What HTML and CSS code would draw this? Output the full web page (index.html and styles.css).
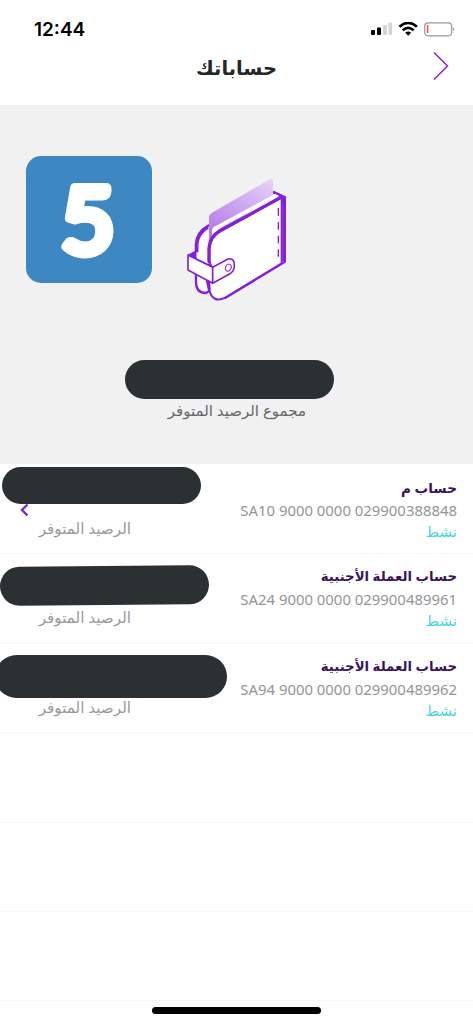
FILE: index.html
```
<!DOCTYPE html>
<html lang="ar">
<head>
    <title>حساباتك</title>
    <meta charset="UTF-8">
    <link rel="stylesheet" href="styles.css">
</head>
<body>
    <div class="status-bar">
        <span class="time">12:44</span>
        <svg class="status-icons" width="86" height="16" viewBox="0 0 86 16">
            <rect x="1" y="8" width="4" height="5" rx="1" fill="#000"/>
            <rect x="7" y="5.500" width="4" height="7.500" rx="1" fill="#000"/>
            <rect x="13" y="3" width="4" height="10" rx="1" fill="#d4d4d4"/>
            <rect x="18.500" y="0.500" width="3.500" height="12.500" rx="1" fill="#d4d4d4"/>
            <path d="M29.500 4.700Q38.200-2.900 46.900 4.700" fill="none" stroke="#000" stroke-width="2.700"/>
            <path d="M32.700 8.200Q38.200 3.400 43.700 8.200" fill="none" stroke="#000" stroke-width="2.600"/>
            <path d="M35.200 10.800Q38.200 8.200 41.200 10.800L38.200 13.800Z" fill="#000"/>
            <rect x="54.700" y="0.800" width="27" height="13" rx="3.500" fill="#fff" stroke="#999" stroke-width="1.200"/>
            <rect x="56.800" y="3" width="1.500" height="8" fill="#f34b45"/>
            <path d="M83.200 5v4.600q2-2.300 0-4.600z" fill="#888"/>
        </svg>
    </div>
    <div class="header">
        <h1 class="title" dir="rtl">حساباتك</h1>
        <svg class="back" width="18" height="30" viewBox="0 0 18 30">
            <path d="M2 1.500L15.500 15L2 28.500" fill="none" stroke="#8a2bd2" stroke-width="1.600"/>
        </svg>
    </div>
    <div class="summary">
        <div class="step"><svg width="126" height="127" viewBox="0 0 126 127"><text class="step-number" x="62" y="96.500">5</text></svg></div>
        <svg class="wallet" width="140" height="145" viewBox="0 0 420 435">
            <defs>
                <linearGradient id="card" x1="1" y1="0" x2="0.300" y2="1">
                    <stop offset="0" stop-color="#e6d3f7"/>
                    <stop offset="1" stop-color="#b57bea"/>
                </linearGradient>
            </defs>
            <g stroke="#8420dc" stroke-linejoin="round" fill="#fff">
                <path d="M78 350V238Q80 202 112 184L310 82L345 97L130 370L108 384Q78 384 78 350Z" stroke-width="7"/>
                <path d="M80 262V236Q84 203 114 186" fill="none" stroke-width="11"/>
                <path d="M117 240V158Q117 148 126 143L298 44Q309 38 309 50V94L130 215Z" fill="url(#card)" stroke="none"/>
                <path d="M126 212V196Q126 188 136 184L316 86L326 92L150 190Z" stroke="none"/>
                <path d="M118 375V252Q120 215 150 199L335 97V295L166 398Q128 416 118 375Z" stroke-width="6"/>
                <path d="M117 300V250Q120 214 149 198L333 97" fill="none" stroke-width="10"/>
                <path d="M310 80L345 97V291L164 400" fill="none" stroke-width="6"/>
                <path d="M342 97V290" fill="none" stroke-width="10"/>
                <path d="M325 129v23M325 171v23M325 212v23M325 253v22" fill="none" stroke-width="4"/>
                <path d="M54 270L78 260L128 307L174 282Q195 278 193 303Q192 319 180 326L128 355L54 315Z" stroke="none"/>
                <path d="M128 307L174 282Q195 278 193 303Q192 319 180 326L128 355L54 315V270L128 307V355" stroke-width="5"/>
                <path d="M54 270L78 258V281L118 300V288L128 307Z" fill="#8420dc" stroke-width="3"/>
                <path d="M112 346L118 375" fill="none" stroke-width="9"/>
                <ellipse cx="175" cy="308" rx="8" ry="11" transform="rotate(25 175 308)" stroke-width="3"/>
            </g>
        </svg>
        <div class="total-mask"></div>
        <div class="total-label" dir="rtl">مجموع الرصيد المتوفر</div>
    </div>
    <div class="accounts">
        <div class="account">
            <div class="balance">
                <svg class="arrow" width="9" height="14" viewBox="0 0 9 14"><path d="M7.500 1.500L2 7L7.500 12.500" fill="none" stroke="#7b25cf" stroke-width="2.400"/></svg>
                <div class="mask mask-first"></div>
                <div class="balance-label" dir="rtl">الرصيد المتوفر</div>
            </div>
            <div class="details">
                <div class="name name-short" dir="rtl">حساب م</div>
                <div class="iban">SA10 9000 0000 029900388848</div>
                <div class="state" dir="rtl">نشط</div>
            </div>
        </div>
        <div class="account">
            <div class="balance">
                <div class="mask mask-second"></div>
                <div class="balance-label" dir="rtl">الرصيد المتوفر</div>
            </div>
            <div class="details">
                <div class="name" dir="rtl">حساب العملة الأجنبية</div>
                <div class="iban">SA24 9000 0000 029900489961</div>
                <div class="state" dir="rtl">نشط</div>
            </div>
        </div>
        <div class="account">
            <div class="balance">
                <div class="mask mask-third"></div>
                <div class="balance-label" dir="rtl">الرصيد المتوفر</div>
            </div>
            <div class="details">
                <div class="name" dir="rtl">حساب العملة الأجنبية</div>
                <div class="iban">SA94 9000 0000 029900489962</div>
                <div class="state" dir="rtl">نشط</div>
            </div>
        </div>
        <div class="account"></div>
        <div class="account"></div>
        <div class="account"></div>
    </div>
    <div class="home-bar"></div>
</body>
</html>
```
FILE: styles.css
```
body {
    position: relative;
    margin: 0;
    height: 1024px;
    overflow: hidden;
    background-color: #fff;
    font-family: "Noto Sans", "DejaVu Sans", sans-serif;
}
.status-bar {
    display: flex;
    justify-content: space-between;
    height: 29px;
    padding: 18px 17px 0 34px;
}
.time {
    font-family: Inter, sans-serif;
    font-size: 19px;
    line-height: 23px;
    font-weight: 600;
    color: #000;
}
.status-icons {
    margin-top: 4px;
}
.header {
    display: grid;
    grid-template-columns: 1fr auto 1fr;
    height: 58px;
}
.title {
    grid-column: 2;
    margin: 5px 0 0;
    font-size: 19.400px;
    line-height: 31px;
    font-weight: bold;
    color: #252629;
}
.back {
    justify-self: end;
    margin: 4px 23px 0 0;
}
.summary {
    display: grid;
    grid-template-columns: 26px 126px 18px 140px;
    grid-template-rows: 255px 40px 24px;
    height: 359px;
    background-color: #f1f1f1;
}
.step {
    grid-column: 2;
    margin-top: 51px;
    height: 127px;
    border-radius: 15px;
    background-color: #3d88c3;
}
.step svg {
    display: block;
}
.step-number {
    font-family: Lato, sans-serif;
    font-size: 92px;
    font-weight: 400;
    text-anchor: middle;
    fill: #fff;
    stroke: #fff;
    stroke-width: 10px;
    stroke-linejoin: round;
}
.wallet {
    grid-column: 4;
    margin-top: 60px;
}
.total-mask {
    grid-column: 1 / -1;
    width: 209px;
    height: 39px;
    margin-left: 125px;
    border-radius: 20px;
    background-color: #2b3033;
}
.total-label {
    grid-column: 1 / -1;
    justify-self: end;
    margin-right: 4px;
    font-size: 15px;
    line-height: 20px;
    color: #67676b;
}
.account {
    display: flex;
    justify-content: space-between;
    box-sizing: border-box;
    height: 89.400px;
    border-bottom: 1px solid #f7f7f7;
}
.account:first-child {
    height: 90.400px;
}
.balance {
    position: relative;
    width: 131px;
    padding-top: 54px;
}
.balance-label {
    font-size: 15.200px;
    line-height: 21px;
    color: #99999b;
}
.account + .account .balance-label,
.account + .account .details {
    margin-top: -1px;
}
.arrow {
    position: absolute;
    left: 20px;
    top: 39px;
}
.mask {
    position: absolute;
    background-color: #2b3033;
    border-radius: 22px;
}
.mask-first {
    left: 2px;
    top: 3px;
    width: 199px;
    height: 37px;
}
.mask-second {
    left: 0;
    top: 11.600px;
    width: 209px;
    height: 39px;
    transform: rotate(-0.500deg);
}
.mask-third {
    left: -5px;
    top: 11.200px;
    width: 232px;
    height: 43px;
}
.details {
    display: flex;
    flex-direction: column;
    align-items: flex-end;
    padding: 12px 16px 0 0;
}
.name {
    font-size: 13.300px;
    line-height: 23px;
    font-weight: bold;
    color: #3a155f;
}
.name-short {
    font-size: 13.600px;
}
.iban {
    font-size: 14.900px;
    line-height: 23px;
    color: #949496;
}
.state {
    font-size: 15px;
    line-height: 19px;
    color: #4dd5da;
}
.home-bar {
    position: absolute;
    left: 152px;
    top: 1007px;
    width: 169px;
    height: 7px;
    border-radius: 4px;
    background-color: #000;
}
```
